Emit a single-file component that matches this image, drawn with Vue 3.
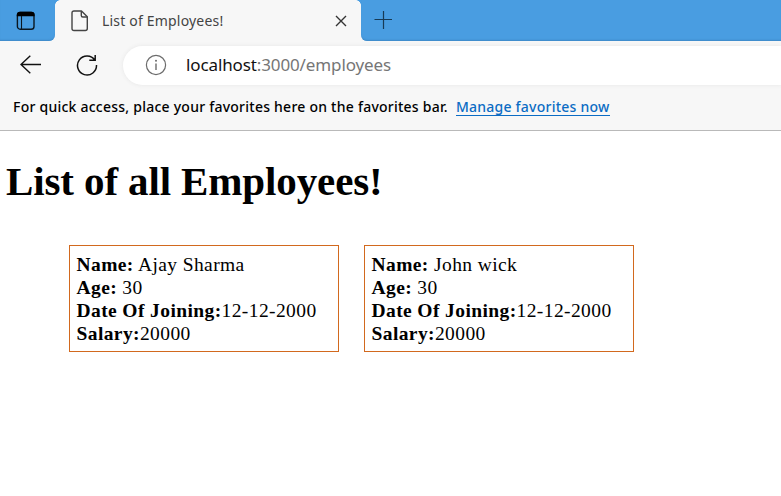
<script setup>
const employees = [
  { id: 1, name: 'Ajay Sharma', age: 30, joined: '12-12-2000', salary: 20000 },
  { id: 2, name: 'John wick', age: 30, joined: '12-12-2000', salary: 20000 },
]
</script>

<template>
  <div class="window">
    <header class="browser">
      <div class="tabs">
        <div class="workspace">
          <svg width="20" height="20" viewBox="0 0 20 20" fill="none" stroke="#0b1720">
            <rect x="1.4" y="1.4" width="16.6" height="16.8" rx="2.8" stroke-width="1.4" />
            <path d="M0.8 5.2V4Q0.8 0.8 4 0.8H15.4Q18.6 0.8 18.6 4V5.2Z" fill="#000" stroke="none" />
            <path d="M5.5 5V18" stroke-width="1.1" />
          </svg>
        </div>
        <div class="tab">
          <svg class="file" width="18" height="22" viewBox="0 0 18 22" fill="none" stroke="#444" stroke-width="1.4" stroke-linejoin="round">
            <path d="M3 1H10.5L16.3 6.8V18.5Q16.3 20.5 14.3 20.5H3Q1 20.5 1 18.5V3Q1 1 3 1Z" />
            <path d="M10.3 1V5.5Q10.3 7 11.8 7H16.3" />
          </svg>
          <span class="tab-title">List of Employees!</span>
          <svg class="close" width="12" height="12" viewBox="0 0 12 12" stroke="#333" stroke-width="1.4">
            <path d="M1 1L11 11M11 1L1 11" />
          </svg>
        </div>
        <div class="new-tab">
          <svg width="18" height="18" viewBox="0 0 18 18" stroke="#173a55" stroke-width="1.2">
            <path d="M9.5 0V18M0.5 8.5H18" />
          </svg>
        </div>
      </div>
      <div class="toolbar">
        <svg class="back" width="22" height="20" viewBox="0 0 22 20" fill="none" stroke="#111" stroke-width="1.4">
          <path d="M21 9.5H1M10.3 0.8L1 9.5L10.3 18.2" />
        </svg>
        <svg class="reload" width="22" height="22" viewBox="0 0 22 22" fill="none" stroke="#111" stroke-width="1.5">
          <path d="M18.9 6.2A9.5 9.5 0 1 0 20.5 11M19.2 1V6.2H13.3" />
        </svg>
        <div class="address">
          <svg class="info" width="22" height="22" viewBox="0 0 22 22" fill="none" stroke="#6c6c6c" stroke-width="1.2">
            <circle cx="11" cy="11" r="9.6" />
            <path d="M11 9.5V16" stroke-width="1.4" />
            <circle cx="11" cy="6.7" r="1" fill="#6c6c6c" stroke="none" />
          </svg>
          <span class="url"><span class="host">localhost</span>:3000/employees</span>
        </div>
      </div>
      <div class="favorites">
        <span class="hint">For quick access, place your favorites here on the favorites bar.</span>
        <a class="manage">Manage favorites now</a>
      </div>
    </header>
    <main class="page">
      <h1>List of all Employees!</h1>
      <div class="cards">
        <div v-for="e in employees" :key="e.id" class="card">
          <div><b>Name:</b> {{ e.name }}</div>
          <div><b>Age:</b> {{ e.age }}</div>
          <div><b>Date Of Joining:</b>{{ e.joined }}</div>
          <div><b>Salary:</b>{{ e.salary }}</div>
        </div>
      </div>
    </main>
  </div>
</template>

<style>
body { background: #fff; overflow: hidden; }
</style>

<style scoped>
.window { width: 781px; height: 496px; overflow: hidden; background: #fff; }
.browser { height: 131px; box-sizing: border-box; background: #f7f7f7; border-bottom: 1px solid #b9b9b9; font-family: "Noto Sans", sans-serif; white-space: nowrap; }
.tabs { display: flex; height: 41px; }
.workspace { width: 55px; box-sizing: border-box; padding: 11px 0 0 16px; background: #499de1; border-bottom-right-radius: 6px; box-shadow: inset 0 -2px 2px -1px #3e88c6; }
.tab { display: flex; align-items: center; width: 306px; box-sizing: border-box; padding: 0 14px 0 16px; position: relative; }
.tab::before, .tab::after { content: ""; position: absolute; top: 0; width: 5px; height: 5px; }
.tab::before { left: 0; background: radial-gradient(circle at 100% 100%, #f7f7f7 4.5px, #499de1 5px); }
.tab::after { right: 0; background: radial-gradient(circle at 0 100%, #f7f7f7 4.5px, #499de1 5px); }
.tab-title { flex: 1; margin-left: 13px; font-size: 14px; letter-spacing: 0.19px; color: #444; }
.new-tab { flex: 1; padding: 11px 0 0 13px; background: #499de1; border-bottom-left-radius: 6px; box-shadow: inset 0 -2px 2px -1px #3e88c6; }
svg { display: block; flex: none; }
.toolbar { display: flex; align-items: center; height: 48px; padding-left: 20px; }
.reload { margin-left: 34px; }
.address { display: flex; align-items: center; flex: 1; height: 39px; margin-left: 25px; padding-left: 22px; background: #fff; border-radius: 20px 0 0 20px; box-shadow: 0 0 4px #e6e6e6; }
.url { margin: 0 0 2px 19px; font-size: 17px; letter-spacing: -0.12px; color: #767676; }
.host { color: #111; }
.favorites { display: flex; align-items: center; height: 37px; padding: 0 0 2px 13px; box-sizing: border-box; font-size: 14px; letter-spacing: 0.24px; }
.hint { color: #000; font-weight: 500; }
.manage { margin-left: 8px; color: #0b6cc4; font-weight: 500; line-height: 17px; border-bottom: 1px solid #0b6cc4; }
.page { font-family: "Liberation Serif", serif; color: #000; }
h1 { margin: 26px 0 0 6px; font-size: 41px; letter-spacing: -0.12px; line-height: 48px; font-weight: 700; white-space: nowrap; }
.cards { display: flex; gap: 25px; margin: 40px 0 0 69px; }
.card { width: 270px; height: 107px; box-sizing: border-box; padding: 7px 6.5px; border: 1px solid #d2691e; font-size: 19.5px; letter-spacing: 0.4px; line-height: 23px; white-space: nowrap; }
</style>
